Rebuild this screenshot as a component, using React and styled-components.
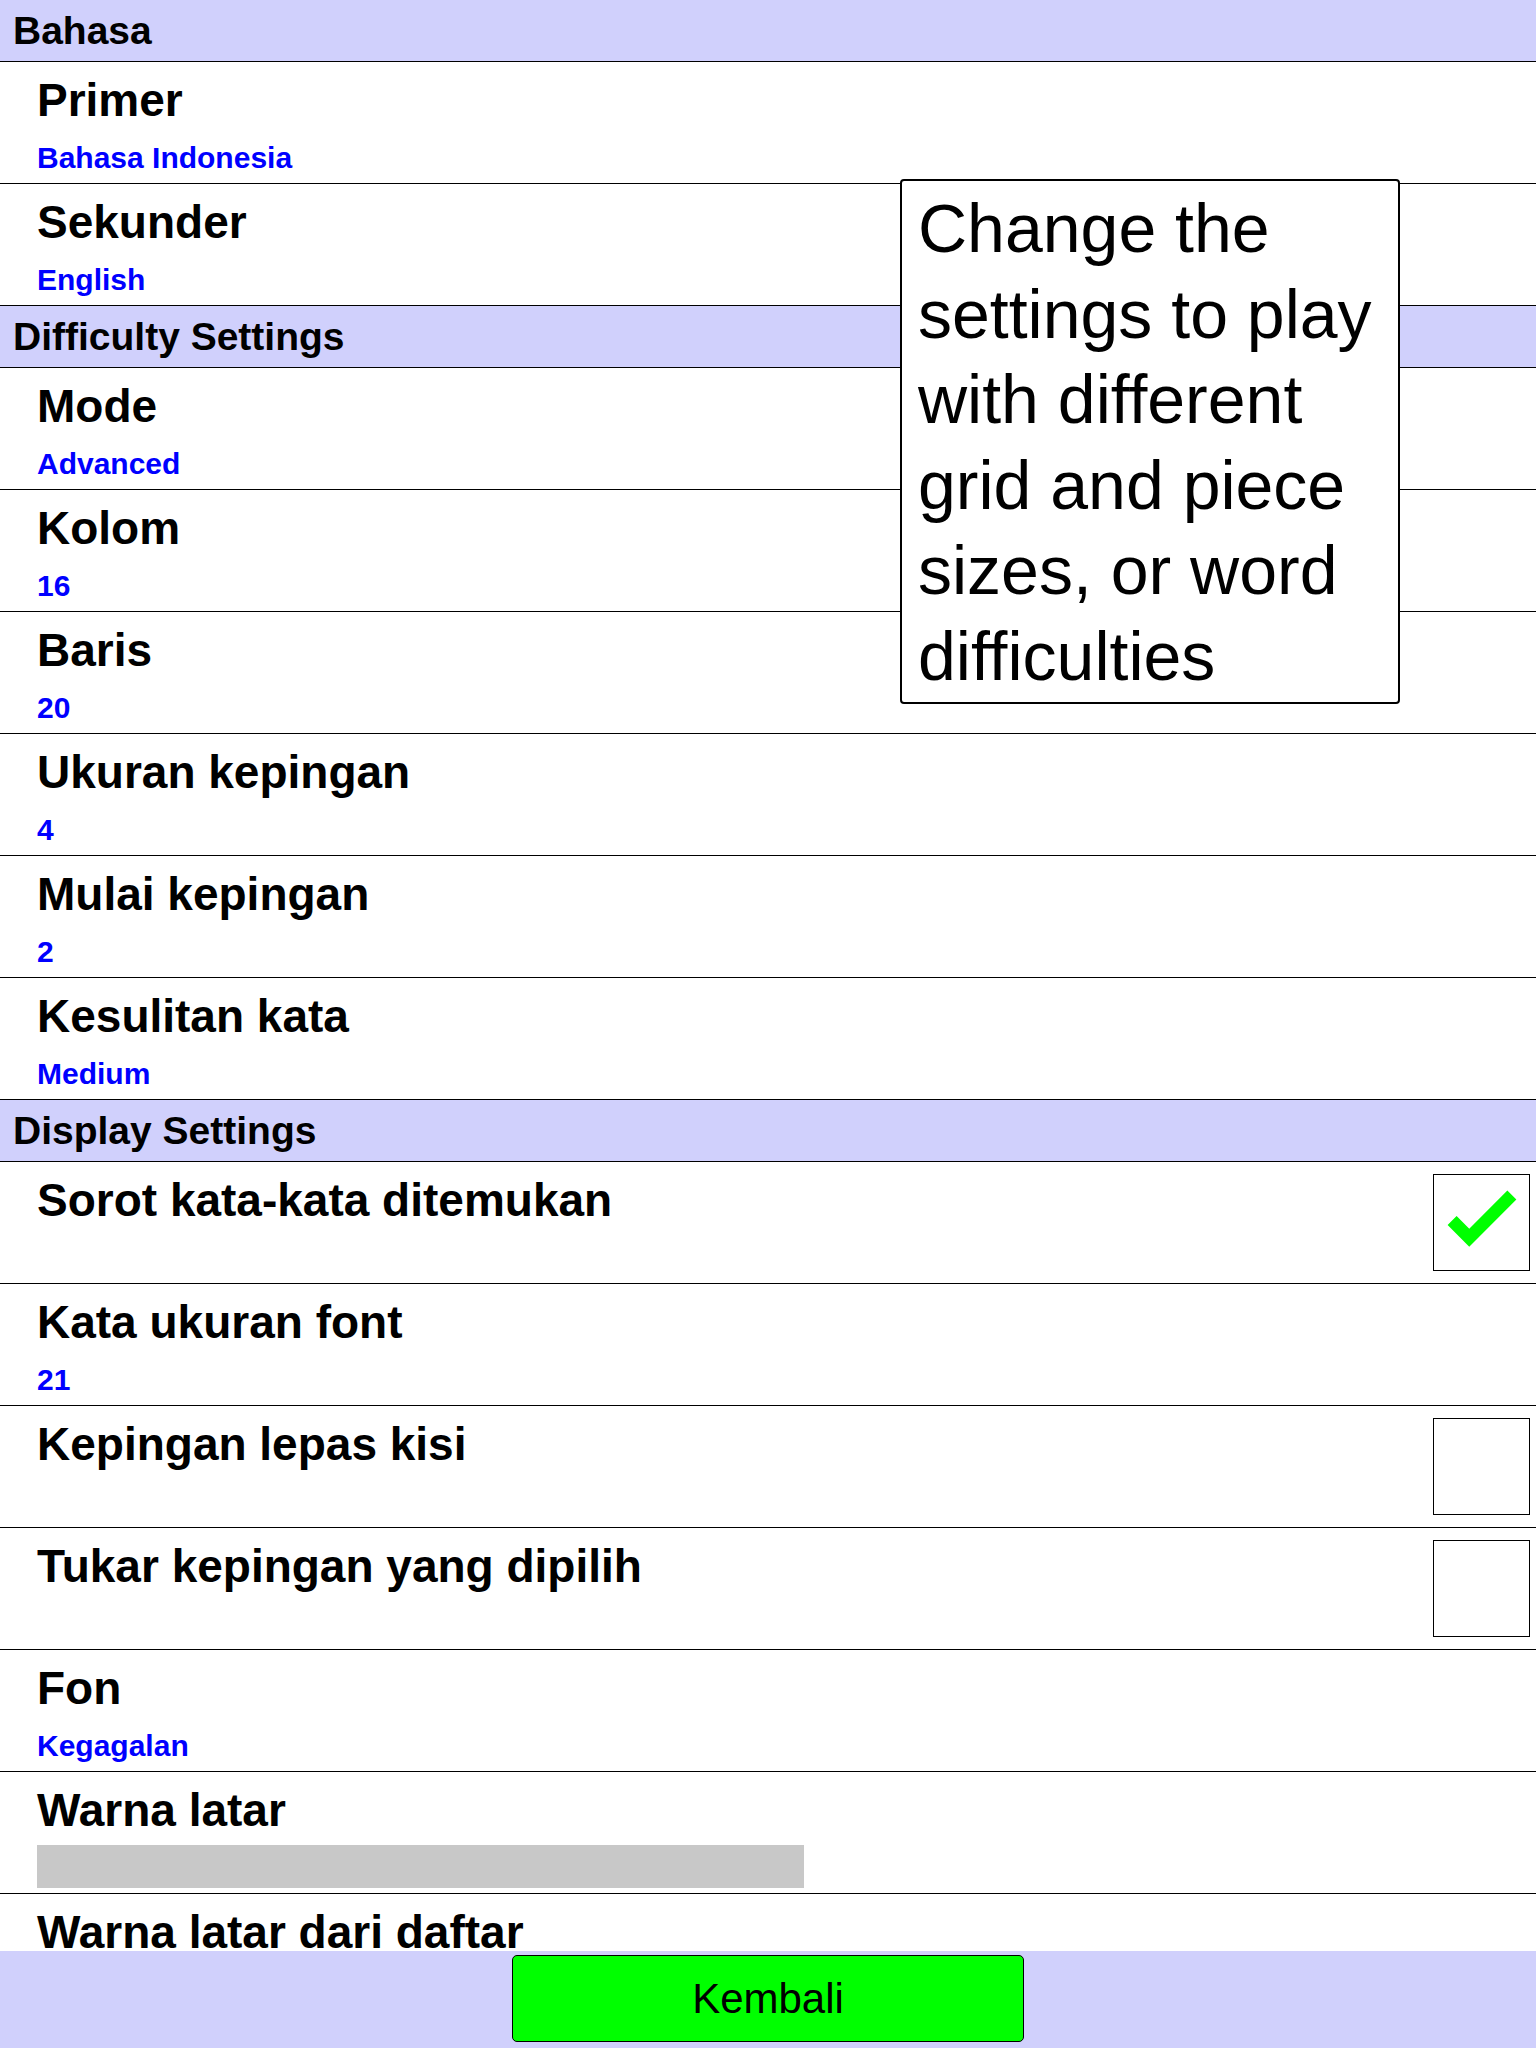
import React from 'react'
import styled, { createGlobalStyle } from 'styled-components'

const GlobalStyle = createGlobalStyle`
	html, body {
		margin: 0;
		padding: 0;
		background: #ffffff;
	}
	body {
		font-family: "Liberation Sans", Arial, sans-serif;
		color: #000000;
	}
`

const Screen = styled.div`
	position: relative;
	width: 1536px;
	height: 2048px;
	display: flex;
	flex-direction: column;
	overflow: hidden;
	background: #ffffff;
`

const List = styled.div`
	flex: 1;
	overflow: hidden;
`

const SectionHeader = styled.div`
	height: 61px;
	line-height: 61px;
	padding-left: 13px;
	background: #d0d0fc;
	border-bottom: 1px solid #000;
	font-size: 39px;
	font-weight: 700;
	white-space: nowrap;
`

const Row = styled.div`
	height: 122px;
	box-sizing: border-box;
	border-bottom: 1px solid #000;
	display: flex;
	align-items: ${p => (p.$check ? 'center' : 'flex-start')};
	justify-content: space-between;
	padding: ${p => (p.$check ? '0 6px 0 37px' : '11px 0 0 37px')};
`

const RowText = styled.div`
	display: flex;
	flex-direction: column;
	align-self: flex-start;
	padding-top: ${p => (p.$check ? '11px' : '0')};
`

const Title = styled.div`
	font-size: 46px;
	line-height: 54px;
	font-weight: 700;
	white-space: nowrap;
`

const Value = styled.div`
	margin-top: 13px;
	font-size: 30px;
	line-height: 36px;
	font-weight: 700;
	color: #0000ff;
	white-space: nowrap;
`

const Swatch = styled.div`
	margin-top: 8px;
	width: 767px;
	height: 43px;
	background: ${p => p.$color};
`

const CheckBox = styled.div`
	width: 97px;
	height: 97px;
	box-sizing: border-box;
	border: 1px solid #000;
	background: #fff;
	display: flex;
	align-items: center;
	justify-content: center;
	flex-shrink: 0;
`

const Footer = styled.div`
	height: 97px;
	flex-shrink: 0;
	background: #d0d0fc;
	display: flex;
	justify-content: center;
	padding-top: 4px;
	box-sizing: border-box;
`

const BackButton = styled.button`
	width: 512px;
	height: 87px;
	background: #00ff00;
	border: 1px solid #000;
	border-radius: 5px;
	font-family: "Liberation Sans", Arial, sans-serif;
	font-size: 42px;
	color: #000;
	padding: 0;
	cursor: pointer;
`

const Tooltip = styled.div`
	position: absolute;
	left: 900px;
	top: 179px;
	width: 500px;
	height: 525px;
	box-sizing: border-box;
	border: 2px solid #000;
	border-radius: 4px;
	background: #fff;
	padding: 5px 10px 0 16px;
	font-size: 68px;
	line-height: 85.5px;
`

const Check = () => (
	<svg width="97" height="97" viewBox="0 0 97 97">
		<polyline
			points="18.5,46.5 36,64 79.5,20.5"
			fill="none"
			stroke="#00ff00"
			strokeWidth="13"
			strokeLinejoin="miter"
		/>
	</svg>
)

const SettingRow = ({ title, value, swatch }) => (
	<Row>
		<RowText>
			<Title>{title}</Title>
			{value && <Value>{value}</Value>}
			{swatch && <Swatch $color={swatch} />}
		</RowText>
	</Row>
)

const CheckRow = ({ title, checked }) => (
	<Row $check>
		<RowText $check>
			<Title>{title}</Title>
		</RowText>
		<CheckBox>{checked && <Check />}</CheckBox>
	</Row>
)

const App = () => (
	<Screen>
		<GlobalStyle />
		<List>
			<SectionHeader>Bahasa</SectionHeader>
			<SettingRow title="Primer" value="Bahasa Indonesia" />
			<SettingRow title="Sekunder" value="English" />

			<SectionHeader>Difficulty Settings</SectionHeader>
			<SettingRow title="Mode" value="Advanced" />
			<SettingRow title="Kolom" value="16" />
			<SettingRow title="Baris" value="20" />
			<SettingRow title="Ukuran kepingan" value="4" />
			<SettingRow title="Mulai kepingan" value="2" />
			<SettingRow title="Kesulitan kata" value="Medium" />

			<SectionHeader>Display Settings</SectionHeader>
			<CheckRow title="Sorot kata-kata ditemukan" checked />
			<SettingRow title="Kata ukuran font" value="21" />
			<CheckRow title="Kepingan lepas kisi" />
			<CheckRow title="Tukar kepingan yang dipilih" />
			<SettingRow title="Fon" value="Kegagalan" />
			<SettingRow title="Warna latar" swatch="#c8c8c8" />
			<SettingRow title="Warna latar dari daftar" />
		</List>
		<Footer>
			<BackButton>Kembali</BackButton>
		</Footer>
		<Tooltip>
			Change the settings to play with different grid and piece sizes, or word difficulties
		</Tooltip>
	</Screen>
)

export default App
